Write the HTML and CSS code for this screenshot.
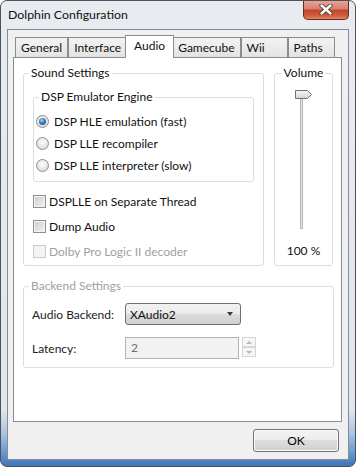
FILE: index.html
```html
<!DOCTYPE html>
<html lang="en">
<head>
  <meta charset="UTF-8" />
  <title>Dolphin Configuration</title>
  <link rel="stylesheet" href="styles.css">
</head>
<body>
  <div class="window">
    <div class="titlebar">
      <span class="title">Dolphin Configuration</span>
      <div class="close-btn">
        <svg width="14" height="11" viewBox="0 0 14 11">
          <path d="M2.5 1.5 L11.5 9.5 M11.5 1.5 L2.5 9.5" stroke="#4a3a38" stroke-width="4.2" stroke-linecap="round" />
          <path d="M2.5 1.5 L11.5 9.5 M11.5 1.5 L2.5 9.5" stroke="#ffffff" stroke-width="2.4" stroke-linecap="round" />
        </svg>
      </div>
    </div>

    <div class="client">
      <div class="tabs">
        <div class="tab">General</div>
        <div class="tab">Interface</div>
        <div class="tab active">Audio</div>
        <div class="tab">Gamecube</div>
        <div class="tab">Wii</div>
        <div class="tab">Paths</div>
      </div>

      <div class="panel">
        <div class="top-row">
          <fieldset class="group sound">
            <legend>Sound Settings</legend>
            <fieldset class="group engine">
              <legend>DSP Emulator Engine</legend>
              <div class="radio-row"><span class="radio checked"></span>DSP HLE emulation (fast)</div>
              <div class="radio-row"><span class="radio"></span>DSP LLE recompiler</div>
              <div class="radio-row"><span class="radio"></span>DSP LLE interpreter (slow)</div>
            </fieldset>
            <div class="check-row"><span class="check"></span>DSPLLE on Separate Thread</div>
            <div class="check-row"><span class="check"></span>Dump Audio</div>
            <div class="check-row disabled"><span class="check"></span>Dolby Pro Logic II decoder</div>
          </fieldset>

          <fieldset class="group volume">
            <legend>Volume</legend>
            <svg class="slider" width="20" height="140" viewBox="0 0 20 140">
              <rect x="6.5" y="4.5" width="2" height="134" fill="#e9e9e9" stroke="#b4b4b4" />
              <defs>
                <linearGradient id="thumb" x1="0" y1="0" x2="0" y2="1">
                  <stop offset="0" stop-color="#f6f6f6" />
                  <stop offset="1" stop-color="#d4d4d4" />
                </linearGradient>
              </defs>
              <path d="M1.5 0.5 H13.5 L17.5 4.5 L13.5 8.5 H1.5 Z" fill="url(#thumb)" stroke="#6f6f6f" />
            </svg>
            <div class="vol-value">100 %</div>
          </fieldset>
        </div>

        <fieldset class="group backend">
          <legend>Backend Settings</legend>
          <div class="form-grid">
            <span class="field-label">Audio Backend:</span>
            <div class="combo">
              <span>XAudio2</span>
              <span class="combo-arrow"></span>
            </div>
            <span class="field-label">Latency:</span>
            <div class="spin-field">
              <div class="text-box">2</div>
              <div class="spin">
                <span class="spin-btn"><span class="arrow-up"></span></span>
                <span class="spin-btn"><span class="arrow-down"></span></span>
              </div>
            </div>
          </div>
        </fieldset>
      </div>

      <div class="buttons">
        <button class="ok-btn">OK</button>
      </div>
    </div>
  </div>
</body>
</html>
```

FILE: styles.css
```css
* {
  box-sizing: border-box;
  margin: 0;
  padding: 0;
}

html, body {
  width: 356px;
  height: 467px;
  overflow: hidden;
  background: #ffffff;
  font-family: Lato, "Segoe UI", sans-serif;
  font-size: 12px;
  color: #111;
}

.window {
  width: 356px;
  height: 467px;
  border: 1px solid #4b5259;
  border-radius: 7px;
  overflow: hidden;
  display: flex;
  flex-direction: column;
  background: linear-gradient(to bottom, #e8ecf0 0%, #e1e6eb 88%, #a9c4e0 93%, #5b8fca 98%, #3f74b5 100%);
}

.titlebar {
  height: 28px;
  display: flex;
  align-items: flex-start;
  flex-shrink: 0;
}

.title {
  padding: 6px 0 0 7px;
  line-height: 16px;
  font-size: 12.3px;
  color: #111;
}

.close-btn {
  margin: -1px 6px 0 auto;
  width: 46px;
  height: 20px;
  border: 1px solid #6b2a1e;
  border-top: none;
  border-radius: 0 0 5px 5px;
  background: linear-gradient(to bottom, #e9a99c 0%, #d9816f 45%, #c4462c 55%, #d2603f 85%, #e3876a 100%);
  display: flex;
  align-items: center;
  justify-content: center;
}

.client {
  margin: 0 6px 0 6px;
  height: 431px;
  border: 1px solid #838d97;
  background: #f0f0f0;
  padding: 5px 6px 0 5px;
  display: flex;
  flex-direction: column;
}

/* tabs */
.tabs {
  height: 22px;
  display: flex;
  align-items: flex-end;
  padding-left: 2px;
}

.tab {
  height: 20px;
  min-width: 47px;
  padding: 0 5px;
  line-height: 19px;
  border: 1px solid #898c95;
  border-bottom: none;
  background: linear-gradient(to bottom, #f3f3f3, #e3e3e3);
  white-space: nowrap;
}

.tab.active {
  height: 23px;
  margin: 0 -2px -1px;
  padding: 0 8px;
  line-height: 20px;
  background: #ffffff;
  position: relative;
  z-index: 1;
}

.panel {
  height: 365px;
  background: #ffffff;
  border: 1px solid #898c95;
  padding: 8px 7px 0 9px;
}

/* group boxes */
.group {
  border: 1px solid #d5dfe5;
  border-radius: 3px;
  min-width: 0;
}

.group legend {
  line-height: 14px;
  padding: 0 2px;
}

.top-row {
  display: flex;
  gap: 10px;
}

.sound {
  width: 241px;
  padding: 10px 9px 1px 9px;
}

.sound > legend {
  margin-left: -4px;
}

.engine {
  padding: 6px 4px 5px 2px;
  margin-bottom: 7px;
}

.engine > legend {
  margin-left: 3px;
}

.radio-row {
  height: 22px;
  display: flex;
  align-items: center;
  gap: 5px;
}

.radio {
  width: 13px;
  height: 13px;
  border-radius: 50%;
  border: 1px solid #8e8f8f;
  background: radial-gradient(circle at 50% 40%, #ffffff 0%, #e4e4e4 60%, #cfcfcf 100%);
  display: flex;
  align-items: center;
  justify-content: center;
}

.radio.checked::after {
  content: "";
  width: 7px;
  height: 7px;
  border-radius: 50%;
  background: radial-gradient(circle at 40% 35%, #a6d4f4 0%, #3a7bc0 45%, #143f77 100%);
}

.check-row {
  height: 25px;
  display: flex;
  align-items: center;
  gap: 3px;
}

.check {
  width: 13px;
  height: 13px;
  border: 1px solid #8e8f8f;
  box-shadow: inset 0 0 0 1px #f4f4f4;
  background: linear-gradient(to bottom right, #cbcbcb, #f4f4f4);
}

.check-row.disabled {
  color: #a0a0a0;
}

.check-row.disabled .check {
  border-color: #cbcbcb;
  background: #f4f4f4;
}

.volume {
  width: 59px;
  display: flex;
  flex-direction: column;
  align-items: center;
  padding: 10px 0 0;
}

.volume > legend {
  margin: 0 auto;
}

.slider {
  display: block;
  margin-left: 1px;
}

.vol-value {
  margin-top: 13px;
  line-height: 16px;
}

.backend {
  margin-top: 13px;
  padding: 10px 8px 8px 8px;
}

.backend > legend {
  margin-left: -3px;
  color: #a0a0a0;
}

.form-grid {
  display: grid;
  grid-template-columns: 93px auto;
  row-gap: 12px;
  align-items: center;
}

.field-label {
  color: #222;
}

.combo {
  width: 116px;
  height: 22px;
  border: 1px solid #707070;
  border-radius: 3px;
  background: linear-gradient(to bottom, #f2f2f2 0%, #ebebeb 50%, #dddddd 50%, #cfcfcf 100%);
  display: flex;
  align-items: center;
  justify-content: space-between;
  padding: 0 7px 0 4px;
}

.combo-arrow {
  width: 0;
  height: 0;
  border-left: 3.5px solid transparent;
  border-right: 3.5px solid transparent;
  border-top: 4px solid #3c3c3c;
}

.spin-field {
  display: flex;
  gap: 3px;
}

.text-box {
  width: 114px;
  height: 22px;
  border: 1px solid #afb4b8;
  background: #f2f2f2;
  color: #6d6d6d;
  padding-left: 5px;
  line-height: 20px;
}

.spin {
  display: flex;
  flex-direction: column;
  width: 14px;
}

.spin-btn {
  height: 10px;
  border: 1px solid #d6d6d6;
  background: #f6f6f6;
  display: flex;
  align-items: center;
  justify-content: center;
}

.arrow-up, .arrow-down {
  width: 0;
  height: 0;
  border-left: 3px solid transparent;
  border-right: 3px solid transparent;
}

.arrow-up {
  border-bottom: 3px solid #b8b8b8;
}

.arrow-down {
  border-top: 3px solid #b8b8b8;
}

/* bottom buttons */
.buttons {
  display: flex;
  justify-content: flex-end;
  padding: 7px 3px 0 0;
}

.ok-btn {
  width: 86px;
  height: 23px;
  border: 1px solid #707070;
  border-radius: 3px;
  background: linear-gradient(to bottom, #f2f2f2 0%, #ebebeb 50%, #dddddd 50%, #cfcfcf 100%);
  box-shadow: inset 0 0 0 1px #fcfcfc;
  font-family: inherit;
  font-size: 12px;
  color: #000;
}
```
